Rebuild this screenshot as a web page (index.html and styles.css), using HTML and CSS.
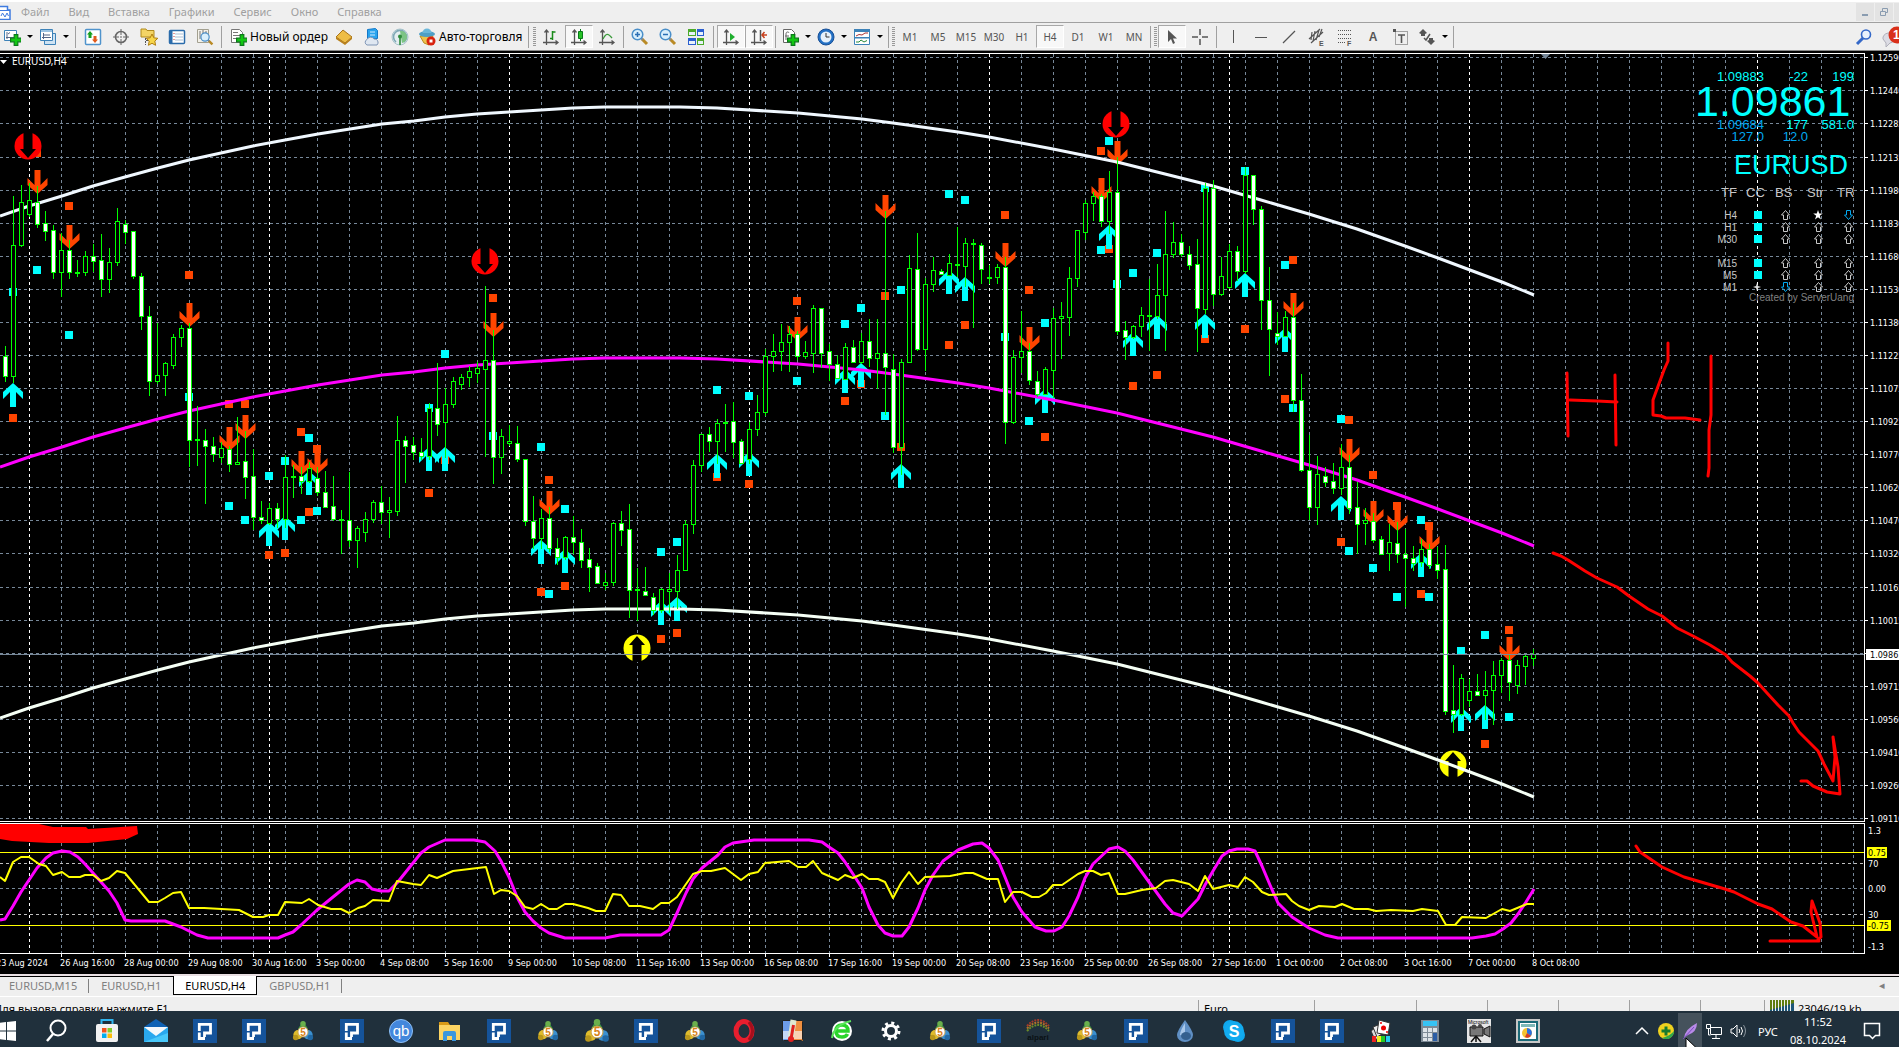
FILE: index.html
```html
<!DOCTYPE html>
<html lang="ru">
<head>
  <meta charset="UTF-8">
  <meta name="viewport" content="width=device-width, initial-scale=1">
  <title>EURUSD,H4</title>
  <link rel="stylesheet" href="styles.css">
</head>
<body>

<svg class="defs" aria-hidden="true">
  <symbol id="plus" viewBox="0 0 10 10"><path d="M3.5.5h3v3h3v3h-3v3h-3v-3h-3v-3h3z" fill="#12c812" stroke="#0a7a1a"/></symbol>
  <symbol id="pbank" viewBox="0 0 24 24"><path d="M0 0h24v24H0z" fill="#15539a"/><path d="M6.300 12V5.300H17.500V14H11.500V18M6.300 13.500V19.500H12" fill="none" stroke="#fff" stroke-width="2.800"/></symbol>
  <symbol id="mt5" viewBox="0 0 24 24">
    <path d="M12 1l5 8-2 6H9L7 9z" fill="#3f9a45"/><circle cx="12" cy="4" r="3" fill="#6ab04c"/>
    <circle cx="6.500" cy="16" r="5" fill="#e0bd2c"/><circle cx="4" cy="19" r="3" fill="#b9971c"/>
    <circle cx="17.500" cy="16" r="5" fill="#3b90d0"/><circle cx="20" cy="19" r="3" fill="#2168a4"/>
    <circle cx="12" cy="13" r="5.500" fill="#fff" stroke="#c9a04a"/><text x="12" y="17" class="five">5</text>
  </symbol>
  <symbol id="zoom" viewBox="0 0 18 18"><path d="M11 11l5 5" stroke="#b98a25" stroke-width="3"/><path d="M10 10l2 2" stroke="#888" stroke-width="2"/><circle cx="6.500" cy="6.500" r="5.300" fill="#d9effc" stroke="#4a8fc9" stroke-width="1.500"/></symbol>
  <symbol id="axes" viewBox="0 0 18 18"><path d="M4.500 2v15M1 14.500h15M2.500 4.500l2-2.500 2 2.500M13.500 12.500l2.500 2-2.500 2" fill="none" stroke="#555" stroke-width="1.300"/></symbol>
</svg>

<nav class="menu">
  <svg class="app" width="11" height="16" viewBox="0 0 11 16"><path d="M-4 2.500H7.500V6h2.500v9.500H-4z" fill="#fff" stroke="#3f7be0" stroke-width="1.500"/><path d="M-4 6.500H10M1 12l1.500-3L5 13l2-4 1.500 3" fill="none" stroke="#3f7be0"/></svg>
  <a href="#file">Файл</a>
  <a href="#view">Вид</a>
  <a href="#insert">Вставка</a>
  <a href="#charts">Графики</a>
  <a href="#service">Сервис</a>
  <a href="#window">Окно</a>
  <a href="#help">Справка</a>
  <div class="window-buttons">
    <button aria-label="Свернуть"><svg width="10" height="10"><path d="M2 8h6" stroke="#8a9cb0" stroke-width="2"/></svg></button>
    <button aria-label="Восстановить"><svg width="10" height="10"><path d="M3.500 4V1.500h5v4H6.500M1.500 4.500h5v4h-5z" fill="none" stroke="#8a9cb0"/></svg></button>
    <button aria-label="Закрыть"><svg width="10" height="10"><path d="M2 2l6 6M8 2L2 8" stroke="#8a9cb0"/></svg></button>
  </div>
</nav>

<div class="toolbar">
  <div class="split">
    <button aria-label="Новый график"><svg width="18" height="18"><path d="M1.500 2.500h12v10h-12z" fill="#fff" stroke="#3d82b8"/><path d="M4 4v7M3 9.500h8M5 6l2-1.500" stroke="#568" fill="none"/><use href="#plus" x="7" y="6" width="12" height="12"/></svg></button>
    <button class="drop" aria-label="Список графиков"></button>
  </div>
  <div class="split">
    <button aria-label="Профили"><svg width="18" height="18"><path d="M5.500 5.500h11v11h-11z" fill="#cfe3f3" stroke="#3d82b8"/><path d="M1.500 1.500h12v11h-12z" fill="#fff" stroke="#3d82b8"/><path d="M2 3h11" stroke="#9cc4e4" stroke-width="2"/><path d="M4.500 5v6M3 9.500h9M4 7h7" stroke="#568" fill="none"/></svg></button>
    <button class="drop" aria-label="Список профилей"></button>
  </div>
  <i class="sep wide"></i>
  <button aria-label="Обзор рынка"><svg width="18" height="18"><rect x="1.500" y="1.500" width="15" height="15" rx="1" fill="#fff" stroke="#4f93cc" stroke-width="1.500"/><path d="M6 3l3 3.500H7.500V10h-3V6.500H3z" fill="#16a020"/><path d="M11 15l3-3.500h-1.500V8h-3v3.500H8z" fill="#e05a1c"/></svg></button>
  <button aria-label="Окно данных"><svg width="18" height="18"><circle cx="9" cy="9" r="5.500" fill="none" stroke="#666" stroke-width="1.600"/><path d="M9 1v6M9 11v6M1 9h6M11 9h6M8 9h2" stroke="#666"/></svg></button>
  <button aria-label="Навигатор"><svg width="18" height="18"><path d="M1 3V1h5l1 1.500h7V9H1z" fill="#f3d465" stroke="#b08a1c"/><path d="M5.500 10v7M6 12.500h3" stroke="#555" stroke-dasharray="2 1"/><path d="M12 6l1.800 3.800 4 .500-3 2.800.800 4.200-3.600-2-3.600 2 .800-4.200-3-2.800 4-.500z" fill="#f7d64a" stroke="#b07e10"/></svg></button>
  <button aria-label="Терминал"><svg width="18" height="18"><rect x="1.500" y="2.500" width="15" height="13" rx="1" fill="#fff" stroke="#2b6cab" stroke-width="1.500"/><path d="M2 3h2.500v12H2z" fill="#2b6cab"/><path d="M7 6h8M7 9h8M7 12h8" stroke="#a9bfd4"/><path d="M5.500 5.500h1M5.500 8.500h1M5.500 11.500h1" stroke="#c33"/></svg></button>
  <button aria-label="Тестер стратегий"><svg width="18" height="18"><path d="M1.500 1.500h11v13h-11z" fill="#f4f2ea" stroke="#a3a090"/><path d="M4 3v8M7 2v9M10 3v6" stroke="#777"/><use href="#zoom" x="4" y="4" width="14" height="14"/></svg></button>
  <i class="sep"></i>
  <button class="labeled order"><svg width="18" height="18"><path d="M2.500 1.500h8l3 3v10h-11z" fill="#fff" stroke="#777"/><path d="M4 4.500h5M4 7.500h7M4 10.500h5" stroke="#777"/><use href="#plus" x="7" y="6" width="12" height="12"/></svg>Новый ордер</button>
  <button aria-label="MetaEditor"><svg width="18" height="18"><path d="M1 9l7-7 9 7-7 6z" fill="#eebd45" stroke="#a9741a"/><path d="M1 9v2l9 6 7-6V9l-7 6z" fill="#b9811c"/></svg></button>
  <button aria-label="Виртуальный хостинг"><svg width="18" height="18"><path d="M4.500 1.500l8-1 2 2v8h-10z" fill="#2aa4ee" stroke="#1478c8"/><path d="M7 4h5M7 7h5" stroke="#cfeaff"/><path d="M4 17a3 3 0 0 1 0-5.500 4 4 0 0 1 7-.500 3.500 3.500 0 0 1 3 6z" fill="#dfe7f1" stroke="#7f95b5"/></svg></button>
  <button aria-label="Сигналы"><svg width="18" height="18"><circle cx="9" cy="9" r="8" fill="#e4eef0" stroke="#a9c4cc"/><path d="M5 14a6.500 6.500 0 1 1 8 0" fill="none" stroke="#7fa8b5" stroke-width="1.600"/><path d="M9 3a6 6 0 0 1 2 12z" fill="#7cc485"/><circle cx="9" cy="8.500" r="2" fill="#2e8b3c"/><path d="M9 9v8" stroke="#2e8b3c" stroke-width="1.600"/></svg></button>
  <button class="labeled auto"><svg width="18" height="18"><path d="M2 8l4 7 5 2 4-9z" fill="#eec34c" stroke="#b98b1e"/><ellipse cx="9" cy="6" rx="8" ry="3" fill="#4f9fc6"/><path d="M4.500 5a4.500 4.500 0 0 1 9 0z" fill="#6bb7da"/><circle cx="13" cy="13" r="4.500" fill="#d8220f"/><path d="M11.500 11.500h3v3h-3z" fill="#fff"/></svg>Авто-торговля</button>
  <i class="sep wide"></i><i class="grip"></i>
  <button aria-label="Бары"><svg width="18" height="18"><use href="#axes" width="18" height="18"/><path d="M10.500 3v9M10.500 4h3M8 10.500h2.500" stroke="#1a8a1a" stroke-width="1.500"/></svg></button>
  <button class="on" aria-label="Свечи"><svg width="18" height="18"><use href="#axes" width="18" height="18"/><path d="M10.500 1v12" stroke="#0a7a1a"/><path d="M8.500 3.500h4v7h-4z" fill="#27c327" stroke="#0a7a1a"/></svg></button>
  <button aria-label="Линия"><svg width="18" height="18"><use href="#axes" width="18" height="18"/><path d="M5 11c3-6 5-6 9-1" fill="none" stroke="#3a9a3a" stroke-width="1.300"/></svg></button>
  <i class="sep"></i>
  <button aria-label="Увеличить"><svg width="18" height="18"><use href="#zoom" width="18" height="18"/><path d="M4 6.500h5M6.500 4v5" stroke="#2a6fb5" stroke-width="1.500"/></svg></button>
  <button aria-label="Уменьшить"><svg width="18" height="18"><use href="#zoom" width="18" height="18"/><path d="M4 6.500h5" stroke="#2a6fb5" stroke-width="1.500"/></svg></button>
  <button aria-label="Окна плиткой"><svg width="18" height="18"><path d="M1 1h8v7H1zM10 10h7v7h-7z" fill="#4caa2a"/><path d="M10 1h7v7h-7zM1 10h8v7H1z" fill="#2b5fd0"/><path d="M2 4h6v3H2zM11 4h5v3h-5zM2 13h6v3H2zM11 13h5v3h-5z" fill="#e8f2fa"/></svg></button>
  <i class="sep wide"></i>
  <button class="on" aria-label="Автопрокрутка"><svg width="18" height="18"><use href="#axes" width="18" height="18"/><path d="M8 5l5 4-5 4z" fill="#1fae2e"/></svg></button>
  <button class="on" aria-label="Сдвиг графика"><svg width="18" height="18"><use href="#axes" width="18" height="18"/><path d="M10.500 2v11" stroke="#555" stroke-width="1.500"/><path d="M17 7h-5M14.500 4L12 7l2.500 3" stroke="#c8401c" stroke-width="1.500" fill="none"/></svg></button>
  <i class="sep"></i>
  <div class="split">
    <button aria-label="Индикаторы"><svg width="18" height="18"><path d="M2.500 1.500h8l3 3v10h-11z" fill="#fff" stroke="#666"/><path d="M5 12V6c0-3 3-2 3-1M4 8h4" stroke="#666" fill="none"/><use href="#plus" x="6" y="6" width="12" height="12"/></svg></button>
    <button class="drop" aria-label="Список индикаторов"></button>
  </div>
  <div class="split">
    <button aria-label="Периоды"><svg width="18" height="18"><circle cx="9" cy="9" r="8" fill="#2370c4" stroke="#174f96"/><circle cx="9" cy="9" r="5.500" fill="#e6f1fb"/><path d="M9 5v4h3.500" stroke="#333" fill="none"/></svg></button>
    <button class="drop" aria-label="Список периодов"></button>
  </div>
  <div class="split">
    <button aria-label="Шаблоны"><svg width="18" height="18"><path d="M1.500 1.500h15v15h-15z" fill="#fff" stroke="#3d82b8"/><path d="M1 1h16v3H1zM1 9h16v1.500H1z" fill="#3d82b8"/><path d="M3 8l3-1.500 3 .500 3-2h3" stroke="#a33" fill="none"/><path d="M3 14h3l2-2 3 2 3-1.500" stroke="#2a8a3a" fill="none"/></svg></button>
    <button class="drop" aria-label="Список шаблонов"></button>
  </div>
  <i class="sep"></i><i class="grip"></i>
  <button>M1</button>
  <button>M5</button>
  <button>M15</button>
  <button>M30</button>
  <button>H1</button>
  <button class="on">H4</button>
  <button>D1</button>
  <button>W1</button>
  <button>MN</button>
  <i class="sep"></i><i class="grip"></i>
  <button class="on" aria-label="Курсор"><svg width="18" height="18"><path d="M5 2v12l3-3 2 5 2-1-2-4.500h4z" fill="#555"/></svg></button>
  <button aria-label="Перекрестие"><svg width="18" height="18"><path d="M9 1v6M9 11v6M1 9h6M11 9h6" stroke="#555" stroke-width="1.500"/></svg></button>
  <i class="sep"></i>
  <button aria-label="Вертикальная линия"><svg width="18" height="18"><path d="M9.500 2v13" stroke="#555"/></svg></button>
  <button aria-label="Горизонтальная линия"><svg width="18" height="18"><path d="M3 9.500h12" stroke="#555"/></svg></button>
  <button aria-label="Трендовая линия"><svg width="18" height="18"><path d="M3 15L15 3" stroke="#555" stroke-width="1.200"/></svg></button>
  <button aria-label="Канал"><svg width="18" height="18"><path d="M1 11L12 1M3 15L15 4M4 4l-1 8M7 3L5 13M11 2L8 12M14 1l-3 8" stroke="#555" stroke-width="1.200"/><text x="11" y="18" class="tiny">E</text></svg></button>
  <button aria-label="Фибоначчи"><svg width="18" height="18"><path d="M2 2.500h13M2 6.500h13M2 10.500h13M2 14.500h8" stroke="#555" stroke-dasharray="1 1"/><text x="11" y="18" class="tiny">F</text></svg></button>
  <button class="letter" aria-label="Текст">A</button>
  <button aria-label="Метка"><svg width="18" height="18"><path d="M3.500 3.500h12v13h-12z" fill="none" stroke="#555" stroke-dasharray="1 1"/><path d="M1 1h3v3H1z" fill="#555"/><path d="M6 7h7M9.500 7v8" stroke="#555" stroke-width="1.600"/></svg></button>
  <div class="split">
    <button aria-label="Стрелки"><svg width="18" height="18"><path d="M5 1l4 4-2 1v2H3V6L1 5zM13 17l-4-4 2-1v-2h4v2l2 1z" fill="#555"/><path d="M6 10l2 2 4-6" stroke="#555" fill="none" stroke-width="1.500"/></svg></button>
    <button class="drop" aria-label="Список стрелок"></button>
  </div>
  <i class="sep"></i>
  <div class="toolbar-right">
    <button aria-label="Поиск"><svg width="18" height="18"><path d="M2 16l6-6" stroke="#3468c8" stroke-width="3"/><circle cx="11" cy="6.500" r="4.500" fill="#e8f1fc" stroke="#3468c8" stroke-width="1.600"/></svg></button>
    <button aria-label="Сообщения"><svg width="24" height="24"><path d="M3 14a6 5 0 1 1 7 4l-4 4v-4z" fill="#dcdce4" stroke="#b0b0ba"/><circle cx="17" cy="10" r="8.500" fill="#d9301a"/><text x="13" y="14" class="badge">1</text></svg></button>
  </div>
</div>

<svg class="chart" id="chart" viewBox="0 51 1899 923" role="img" aria-label="EURUSD,H4"></svg>

<nav class="tabs">
  <a href="#m15">EURUSD,M15</a>
  <a href="#h1">EURUSD,H1</a>
  <a href="#h4" class="active">EURUSD,H4</a>
  <a href="#gbp">GBPUSD,H1</a>
  <span class="scroll">◂</span>
</nav>

<div class="status">
  <span class="hint">Для вызова справки нажмите F1</span>
  <span class="w116">Euro</span>
  <span class="w102"></span>
  <span class="w71"></span>
  <span class="w71"></span>
  <span class="w71"></span>
  <span class="w71"></span>
  <span class="w64"></span>
  <span class="traffic"><svg width="24" height="14"><path d="M0 0h24v10H0z" fill="#5f7d10"/><path d="M0 14v-4L24 3v11z" fill="#1d5578"/><path d="M2.500 0v14M5.500 0v14M8.500 0v14M11.500 0v14M14.500 0v14M17.500 0v14M20.500 0v14" stroke="#efefef"/></svg>23046/19 kb</span>
</div>

<footer class="taskbar">
  <div class="apps">
    <button aria-label="Пуск"><svg width="24" height="24"><path d="M2 4l7-1v8.500H2zM10 3l9-1v9.500h-9zM2 12.500h7V21l-7-1zM10 12.500h9V22l-9-1z" fill="#fff"/></svg></button>
    <button aria-label="Поиск"><svg width="24" height="24"><circle cx="12" cy="9" r="7.500" fill="none" stroke="#fff" stroke-width="2"/><path d="M7 15l-6 7" stroke="#fff" stroke-width="2.500"/></svg></button>
    <button aria-label="Store"><svg width="24" height="24"><path d="M6.500 6V1h11v5" fill="none" stroke="#31b5ee" stroke-width="2"/><rect x="1" y="5" width="22" height="18" rx="2" fill="#f2f2f2"/><path d="M7 9h4.500v4.500H7z" fill="#f1511b"/><path d="M12.500 9H17v4.500h-4.500z" fill="#80cc28"/><path d="M7 14.500h4.500V19H7z" fill="#00adef"/><path d="M12.500 14.500H17V19h-4.500z" fill="#fbbc09"/></svg></button>
    <button aria-label="Почта"><svg width="24" height="24"><path d="M0 8l12-8 12 8z" fill="#0f62b5"/><path d="M0 8h24v15H0z" fill="#2aa8ee"/><path d="M0 8h24l-12 9z" fill="#f5f8fb"/><path d="M0 23l24-9v9z" fill="#48c8fa"/></svg></button>
    <button aria-label="Банк"><svg width="24" height="24"><use href="#pbank"/></svg></button>
    <button aria-label="Банк"><svg width="24" height="24"><use href="#pbank"/></svg></button>
    <button aria-label="MetaTrader"><svg width="22" height="22"><use href="#mt5"/></svg></button>
    <button aria-label="Банк"><svg width="24" height="24"><use href="#pbank"/></svg></button>
    <button aria-label="qBittorrent"><svg width="24" height="24"><circle cx="12" cy="12" r="11.500" fill="#4387dc" stroke="#8fc0f5"/><text x="12" y="17" class="qb">qb</text></svg></button>
    <button aria-label="Проводник"><svg width="24" height="24"><path d="M1 3h9l2 3H1z" fill="#d99a16"/><path d="M1 6h21v15H1z" fill="#fcd462"/><path d="M5 22v-8q0-2 2-2h9q2 0 2 2v8h-4v-5H9v5z" fill="#3b97dd"/></svg></button>
    <button aria-label="Банк"><svg width="24" height="24"><use href="#pbank"/></svg></button>
    <button aria-label="MetaTrader"><svg width="22" height="22"><use href="#mt5"/></svg></button>
    <button aria-label="MetaTrader"><svg width="26" height="26"><use href="#mt5"/></svg></button>
    <button aria-label="Банк"><svg width="24" height="24"><use href="#pbank"/></svg></button>
    <button aria-label="MetaTrader"><svg width="22" height="22"><use href="#mt5"/></svg></button>
    <button aria-label="Opera"><svg width="24" height="24"><ellipse cx="12" cy="12" rx="8" ry="9.500" fill="none" stroke="#e81e2e" stroke-width="5"/><path d="M17 3q7 9 0 18" fill="none" stroke="#a50f1c" stroke-width="3"/></svg></button>
    <button aria-label="Термометр"><svg width="24" height="24"><path d="M2 2h10v20H2z" fill="#6d9ce8"/><path d="M12 2h10v20H12z" fill="#f09040"/><path d="M2 12h20v8H2z" fill="#fff" opacity=".6"/><rect x="1.500" y="1.500" width="20" height="20" rx="1" fill="none" stroke="#222"/><path d="M12.500 1L10 18" stroke="#dfe8d0" stroke-width="6"/><path d="M12.500 6L10 20" stroke="#e02020" stroke-width="3"/><circle cx="10" cy="20" r="3" fill="#e02020"/></svg></button>
    <button aria-label="Браузер"><svg width="24" height="24"><circle cx="12" cy="12" r="10" fill="#fff"/><path d="M6 12h12q0-6-6-6t-6 6q0 6 6 6 4 0 5.500-3" fill="none" stroke="#2bd52b" stroke-width="3.500"/><path d="M2 19Q4 6 21 2" fill="none" stroke="#5be65b" stroke-width="2"/></svg></button>
    <button aria-label="Параметры"><svg width="24" height="24"><circle cx="12" cy="12" r="5.500" fill="none" stroke="#fff" stroke-width="3"/><circle cx="12" cy="12" r="8" fill="none" stroke="#fff" stroke-width="3" stroke-dasharray="3 3.280"/></svg></button>
    <button aria-label="MetaTrader"><svg width="22" height="22"><use href="#mt5"/></svg></button>
    <button aria-label="Банк"><svg width="24" height="24"><use href="#pbank"/></svg></button>
    <button aria-label="Alpari"><svg width="24" height="24"><g fill="none" stroke-width="2" stroke-dasharray="2 1"><path d="M1 7q11-12 22 0" stroke="#a33a2a"/><path d="M1 9.500q11-12 22 0" stroke="#b0702a"/><path d="M1 12q11-12 22 0" stroke="#6a8a2a"/></g><text x="12" y="21" class="alpari">alpari</text></svg></button>
    <button aria-label="MetaTrader"><svg width="22" height="22"><use href="#mt5"/></svg></button>
    <button aria-label="Банк"><svg width="24" height="24"><use href="#pbank"/></svg></button>
    <button aria-label="Капля"><svg width="24" height="24"><path d="M12 1q8 11 8 15a8 7 0 0 1-16 0q0-4 8-15z" fill="#5f8fc4"/><path d="M12 4q-5 8-5 12l5 1z" fill="#a9c8ea"/><ellipse cx="13" cy="17" rx="5" ry="4" fill="#34608f"/></svg></button>
    <button aria-label="Skype"><svg width="24" height="24"><circle cx="8" cy="8" r="7" fill="#0fa8ee"/><circle cx="16" cy="16" r="7" fill="#0fa8ee"/><circle cx="12" cy="12" r="10" fill="#12abf0"/><text x="12" y="18" class="skype">S</text></svg></button>
    <button aria-label="Банк"><svg width="24" height="24"><use href="#pbank"/></svg></button>
    <button aria-label="Банк"><svg width="24" height="24"><use href="#pbank"/></svg></button>
    <button aria-label="Карты"><svg width="24" height="24"><path d="M2 12l4-3 5 9-5 3z" fill="#ddd" stroke="#333"/><path d="M4 8l5-2 4 9-5 3z" fill="#eee" stroke="#333"/><path d="M10 1l11 3-2 12-11-2z" fill="#fff" stroke="#333"/><circle cx="14.500" cy="9" r="2.500" fill="#e00"/><circle cx="12" cy="4" r="1" fill="#e00"/><circle cx="18" cy="13" r="1" fill="#e00"/><path d="M3 17h4v6H3z" fill="#e22"/><path d="M8 17h4v6H8z" fill="#ee2"/><path d="M12 17h4v6h-4z" fill="#2c2"/><path d="M17 17h4v6h-4z" fill="#2ce"/></svg></button>
    <button aria-label="Калькулятор"><svg width="24" height="24"><path d="M3 1h18v22H3z" fill="#7d8a96"/><path d="M5 2h14v5H5z" fill="#36c3f5"/><path d="M5 9h4v4H5zM10 9h4v4h-4zM5 14h4v4H5zM10 14h4v4h-4zM5 19h4v3H5zM10 19h4v3h-4zM15 9h4v4h-4z" fill="#dde3e8"/><path d="M15 14h4v8h-4z" fill="#2b5da5"/></svg></button>
    <button aria-label="Камера"><svg width="24" height="24"><path d="M0 0h24v24H0z" fill="#e6e6e6"/><text x="1" y="5" class="ms">Microsoft</text><path d="M3 8h13v9H3zM17 10l6-3v11l-6-3z" fill="#777" stroke="#111"/><circle cx="7" cy="8" r="2.500" fill="#444"/><circle cx="13" cy="7" r="2" fill="#444"/><path d="M9 17l-5 6M9 17l5 6M9 17v6" stroke="#111" stroke-width="1.500"/></svg></button>
    <button aria-label="Диаграмма"><svg width="24" height="24"><path d="M0 0h24v24H0z" fill="#c7c7c7"/><path d="M3 3h18v18H3z" fill="#fff" stroke="#1b6a78" stroke-width="2"/><path d="M5 5h14v3H5z" fill="#7fb8b8"/><circle cx="11" cy="14" r="5" fill="#f2c230"/><path d="M11 14V9a5 5 0 0 1 4 8z" fill="#2b6fe0"/><path d="M11 14l4 3a5 5 0 0 1-6 1z" fill="#d23a2a"/></svg></button>
  </div>
  <div class="tray">
    <button aria-label="Скрытые значки"><svg width="16" height="16"><path d="M2 11l6-6 6 6" fill="none" stroke="#fff" stroke-width="1.500"/></svg></button>
    <button aria-label="Антивирус"><svg width="16" height="16"><circle cx="8" cy="8" r="8" fill="#f0d21e"/><path d="M4 15a8 8 0 0 0 12-7q-4 5-12 7z" fill="#2fa84a"/><path d="M8 3.500v9M3.500 8h9" stroke="#177a2e" stroke-width="3"/></svg></button>
    <button class="hot" aria-label="Перо"><svg width="18" height="18"><path d="M3 16Q4 7 16 1q0 9-9 12z" fill="#b98ae8"/><path d="M2 17L13 5" stroke="#7a4cc0"/></svg></button>
    <button aria-label="Сеть"><svg width="16" height="16"><path d="M4.500 4.500h11v7h-11zM10 12v3M6 15.500h8" fill="none" stroke="#fff"/><path d="M.5 1.500h4v4h-4zM2.500 6v6h2" fill="#20303c" stroke="#fff"/></svg></button>
    <button aria-label="Громкость"><svg width="16" height="16"><path d="M1 6h2l4-4v12l-4-4H1zM9 6q1.500 2 0 4M11 4q3 4 0 8" fill="none" stroke="#fff"/><path d="M13.500 2q4 6 0 12" fill="none" stroke="#8a949c"/></svg></button>
    <span class="lang">РУС</span>
    <time class="clock">11:52<br>08.10.2024</time>
    <button class="note" aria-label="Уведомления"><svg width="18" height="18"><path d="M1.500 1.500h15v12h-4l-3 3-3-3h-5z" fill="none" stroke="#fff" stroke-width="1.500"/></svg></button>
    <svg class="pointer" width="12" height="18" viewBox="0 0 12 18"><path d="M1 1v15l4-3.500 2.500 5 2.500-1-2-5h4z" fill="#fff" stroke="#000"/></svg>
  </div>
</footer>

<script src="chart.js"></script>
</body>
</html>
```
FILE: styles.css
```css
* {
  box-sizing: border-box;
}
body {
  margin: 0;
  background: #efefef;
  color: #000;
  font-family: "Noto Sans", "Open Sans", sans-serif;
  font-size: 11px;
  overflow: hidden;
}
button {
  border: 0;
  padding: 0;
  background: none;
  font: inherit;
  color: inherit;
  display: flex;
  align-items: center;
  justify-content: center;
}
a {
  color: inherit;
  text-decoration: none;
}
svg {
  display: block;
  flex: none;
}
.defs {
  position: absolute;
  width: 0;
  height: 0;
}

/* menu */
.menu {
  display: flex;
  align-items: center;
  gap: 1px;
  height: 23px;
  border-top: 2px solid #fff;
  border-bottom: 1px solid #a0a0a0;
  color: #a0a0a0;
  overflow: hidden;
}
.menu a {
  padding: 0 9px;
  line-height: 20px;
}
.window-buttons {
  display: flex;
  gap: 1px;
  margin-left: auto;
  margin-right: -13px;
}
.window-buttons button {
  width: 18px;
  height: 18px;
  background: #e3e3e3;
}

/* toolbar */
.toolbar {
  display: flex;
  align-items: center;
  height: 28px;
  border-bottom: 1px solid #8a8a8a;
  overflow: hidden;
  color: #555;
  font-size: 10px;
}
.toolbar button {
  width: 28px;
  height: 23px;
  flex: none;
}
.toolbar .on {
  background: #f8f8f8;
  border: 1px solid #a8a8a8;
  border-right-color: #fff;
  border-bottom-color: #fff;
}
.toolbar .labeled {
  gap: 3px;
  justify-content: flex-start;
  color: #000;
  font-size: 12px;
  white-space: nowrap;
}
.toolbar .order {
  width: 106px;
  padding-left: 5px;
}
.toolbar .auto {
  width: 111px;
  padding-left: 4px;
}
.toolbar .letter {
  font: bold 12px "Liberation Sans", sans-serif;
}
.split {
  display: flex;
  flex: none;
  width: 36px;
}
.toolbar .split button {
  width: 24px;
}
.toolbar .split .drop {
  width: 12px;
}
.drop::before {
  content: "";
  border: 3px solid transparent;
  border-top-color: #000;
  border-bottom: 0;
}
.sep {
  flex: none;
  width: 1px;
  height: 22px;
  margin: 0 2px;
  background: #a0a0a0;
}
.sep.wide {
  margin: 0 3px;
}
.grip {
  flex: none;
  width: 3px;
  height: 20px;
  margin: 0 1px;
  background: repeating-linear-gradient(#999 0 1px, #efefef 1px 2px);
}
.toolbar-right {
  display: flex;
  margin-left: auto;
  margin-right: -7px;
}
.tiny {
  font: bold 7px "Liberation Sans", sans-serif;
  fill: #555;
}
.badge {
  font: bold 12px "Liberation Sans", sans-serif;
  fill: #fff;
}

/* chart */
.chart {
  width: 100%;
  height: auto;
  background: #000;
  font-family: "Liberation Sans", sans-serif;
}
.crisp {
  shape-rendering: crispEdges;
}
.axis {
  font-family: "DejaVu Sans Condensed", "Noto Sans", sans-serif;
  font-size: 9px;
  fill: #fff;
}
.title {
  font-family: "Noto Sans", sans-serif;
  font-size: 10px;
  fill: #fff;
}
.dark {
  fill: #000;
}
.quote {
  font-size: 13px;
  text-anchor: end;
}
.big {
  font-size: 43px;
}
.symbol {
  font-size: 27px;
}
.head {
  font-size: 13px;
  fill: #c8c8c8;
}
.tf {
  font-size: 10px;
  fill: #c8c8c8;
  text-anchor: end;
}
.author {
  font-size: 10px;
  fill: #808080;
  text-anchor: end;
}
.cyan {
  fill: #0ff;
}
.blue {
  fill: #00a8f0;
}
.ink {
  fill: none;
  stroke: #f00;
  stroke-width: 3px;
  stroke-linejoin: round;
  stroke-linecap: round;
}

/* chart tabs */
.tabs {
  display: flex;
  height: 23px;
  border-top: 2px solid #e8dfe2;
  border-bottom: 1px solid #fff;
  box-shadow: inset 0 1px 0 #000;
  color: #808080;
}
.tabs a {
  padding: 0 12px;
  line-height: 19px;
  white-space: nowrap;
  background: linear-gradient(#808080, #808080) right center / 1px 14px no-repeat;
}
.tabs a:first-child {
  padding-left: 9px;
}
.tabs a:nth-child(2) {
  background: none;
}
.tabs .active {
  height: 19px;
  background: #fff;
  border: 1px solid #000;
  border-top: 0;
  padding: 0 11px;
  color: #000;
}
.scroll {
  margin-left: auto;
  padding-right: 14px;
  line-height: 18px;
}

/* status bar */
.status {
  display: flex;
  height: 14px;
  overflow: hidden;
  white-space: nowrap;
}
.status span {
  border-left: 1px solid #a0a0a0;
  padding-left: 5px;
  height: 14px;
  margin-top: 3px;
  line-height: 18px;
}
.status .hint {
  flex: 1;
  border: 0;
  padding: 0;
  margin-left: -6px;
}
.w116 {
  width: 116px;
}
.w102 {
  width: 102px;
}
.w71 {
  width: 71px;
}
.w64 {
  width: 64px;
}
.traffic {
  display: flex;
  gap: 4px;
  width: 135px;
}

/* taskbar */
.taskbar {
  display: flex;
  justify-content: space-between;
  height: 36px;
  padding-top: 2px;
  background: #20303c;
  color: #fff;
  overflow: hidden;
}
.apps {
  display: flex;
  margin-left: -16px;
}
.apps button {
  width: 49px;
  height: 36px;
}
.tray {
  display: flex;
  align-items: center;
  height: 36px;
  padding-right: 5px;
  position: relative;
}
.tray button {
  width: 24px;
  height: 36px;
}
.tray .hot {
  background: #45525c;
}
.tray .note {
  width: 44px;
}
.lang {
  width: 36px;
  text-align: center;
}
.clock {
  width: 64px;
  text-align: center;
  line-height: 18px;
}
.pointer {
  position: absolute;
  left: 55px;
  top: 24px;
}
.five {
  font: bold 11px "Liberation Sans", sans-serif;
  text-anchor: middle;
  fill: #d98216;
}
.qb {
  font: 15px "Liberation Sans", sans-serif;
  text-anchor: middle;
  fill: #fff;
}
.alpari {
  font: bold 8px "Liberation Sans", sans-serif;
  text-anchor: middle;
  fill: #0a1015;
}
.skype {
  font: bold 16px "Liberation Sans", sans-serif;
  text-anchor: middle;
  fill: #fff;
}
.ms {
  font: 5px "Liberation Sans", sans-serif;
}
```
FILE: chart.js
```js
const NS = 'http://www.w3.org/2000/svg';
const chart = document.getElementById('chart');

function add(tag, attrs, text) {
  const el = document.createElementNS(NS, tag);
  for (const key in attrs) el.setAttribute(key, attrs[key]);
  if (text !== undefined) el.textContent = text;
  chart.appendChild(el);
  return el;
}

function path(d, stroke, width, dash) {
  return add('path', { d, stroke, 'stroke-width': width || 1, fill: 'none', 'stroke-dasharray': dash || 'none', class: 'crisp' });
}

const RIGHT = 1864;
const SLATE = '#778899';

// grid
const prices = ['1.12590', '1.12440', '1.12285', '1.12135', '1.11980', '1.11830', '1.11680', '1.11530',
  '1.11380', '1.11225', '1.11075', '1.10925', '1.10770', '1.10620', '1.10470', '1.10320',
  '1.10165', '1.10015', '1.09860', '1.09715', '1.09560', '1.09410', '1.09260', '1.09110'];
const rowY = prices.map((p, i) => 57 + 33 * i + (i > 2 ? 1 : 0) + (i > 15 ? 1 : 0));
const weeks = [29, 269, 509, 749, 989, 1229, 1469, 1757];

rowY.forEach(y => path(`M0 ${y}.5H${RIGHT}`, SLATE, 1, '3 3'));
for (let x = 29; x < RIGHT; x += 32) {
  if (!weeks.includes(x)) path(`M${x}.5 54V821M${x}.5 825V953`, SLATE, 1, '3 3');
}
weeks.forEach(x => path(`M${x}.5 54V821M${x}.5 825V953`, '#fff', 1, '3 3'));

// signals
const buyDots = [[13,292],[37,270],[69,335],[189,397],[229,506],[245,520],[269,476],[285,461],[309,438],
  [301,520],[317,511],[429,408],[445,354],[493,436],[541,447],[565,509],[549,594],[661,552],[677,542],
  [717,390],[749,396],[797,381],[845,324],[861,308],[885,416],[901,290],[949,194],[965,200],[1005,337],
  [1045,323],[1029,421],[1101,250],[1109,141],[1117,284],[1133,273],[1157,253],[1205,188],[1245,171],
  [1285,265],[1293,408],[1341,419],[1349,551],[1373,568],[1397,597],[1421,520],[1429,597],[1461,651],
  [1485,635],[1509,717]];
const sellDots = [[37,153],[69,206],[189,275],[13,418],[229,404],[245,404],[301,432],[317,449],[309,512],
  [269,555],[285,553],[429,493],[445,460],[493,298],[549,480],[541,592],[565,586],[661,639],[677,633],
  [717,477],[749,484],[797,301],[845,401],[861,384],[885,296],[901,447],[949,345],[965,325],[1005,215],
  [1029,290],[1045,437],[1101,151],[1109,249],[1133,386],[1157,375],[1205,339],[1245,329],[1285,399],
  [1293,260],[1341,542],[1349,420],[1373,475],[1397,506],[1421,594],[1429,526],[1485,744],[1509,630]];
const sellArrows = [[37,194],[69,249],[189,327],[229,451],[245,439],[301,475],[317,474],[493,337],[549,515],
  [797,341],[885,219],[1005,267],[1029,351],[1101,202],[1117,165],[1293,317],[1349,463],[1373,525],
  [1397,531],[1429,552],[1509,661]];
const buyArrows = [[13,383],[269,522],[285,516],[309,471],[429,447],[445,447],[541,540],[565,549],[661,601],
  [677,597],[717,454],[749,452],[845,369],[861,363],[901,464],[949,270],[965,277],[1045,389],[1109,225],
  [1133,332],[1157,315],[1205,314],[1245,273],[1285,328],[1341,496],[1421,553],[1461,707],[1485,705]];

buyDots.forEach(([x, y]) => add('rect', { x: x - 4, y: y - 4, width: 8, height: 8, fill: '#0ff' }));
sellDots.forEach(([x, y]) => add('rect', { x: x - 4, y: y - 4, width: 8, height: 8, fill: '#ff4500' }));

// f = 1 points up, f = -1 points down, tip at x,y
function arrow(x, y, f, fill) {
  const pts = [[0, 0], [10, 9], [10, 16], [3, 9], [3, 24], [-3, 24], [-3, 9], [-10, 16], [-10, 9]];
  add('polygon', { points: pts.map(p => `${x + p[0]},${y + f * p[1]}`).join(' '), fill });
}
sellArrows.forEach(([x, y]) => arrow(x + 0.5, y, -1, '#ff4500'));
buyArrows.forEach(([x, y]) => arrow(x, y, 1, '#0ff'));

function reversal(x, y, f, fill) {
  add('circle', { cx: x, cy: y, r: 13.5, fill });
  const pts = [[-4.5, -14], [4.5, -14], [4.5, 3], [8, 3], [0, 12], [-8, 3], [-4.5, 3]];
  add('polygon', { points: pts.map(p => `${x + p[0]},${y + f * p[1]}`).join(' '), fill: '#000' });
}
reversal(28, 146, 1, '#f00');
reversal(485, 261, 1, '#f00');
reversal(1116, 124, 1, '#f00');
reversal(637, 648, -1, '#ff0');
reversal(1453, 764, -1, '#ff0');

// envelope, one curve drawn with three shifts
const envelope = [[0,216],[29,206],[62,196],[93,186],[125,177],[158,168],[189,160],[221,153],[253,146],[285,140],
  [318,134],[350,129],[382,124],[414,121],[445,117],[477,114],[509,112],[541,110],[573,108],[605,107],[640,107],
  [680,107],[717,108],[766,111],[798,113],[830,116],[862,119],[893,123],[958,132],[989,137],[1053,149],[1117,162],
  [1165,174],[1213,186],[1261,200],[1309,214],[1357,229],[1405,246],[1438,258],[1470,270],[1502,282],[1534,295]];
function line(points, dy, stroke, width) {
  add('polyline', { points: points.map(p => `${p[0]},${p[1] + dy}`).join(' '), fill: 'none', stroke, 'stroke-width': width, 'stroke-linejoin': 'round' });
}
line(envelope, 0, '#f0f8ff', 3);
line(envelope, 251, '#f0f', 3);
line(envelope, 502, '#f5fff5', 3);

// candles: high, body top, body bottom, low, 1 = up
const candles = [[346,356,376,382,0],[196,245,376,383,1],[185,202,245,247,1],[183,200,214,217,1],[186,202,224,228,0],
  [211,223,231,241,0],[225,230,272,279,0],[233,250,272,297,1],[240,250,272,279,0],[260,272,273,277,1],
  [251,256,272,276,1],[244,256,261,272,0],[234,260,279,297,0],[248,262,279,293,1],[208,221,262,266,1],
  [220,224,232,244,0],[231,231,276,279,0],[273,276,316,330,0],[306,316,381,396,0],[323,375,381,384,1],
  [362,363,375,396,1],[334,337,365,369,1],[325,328,337,347,1],[323,328,440,467,0],[406,439,440,466,1],
  [429,440,446,504,0],[437,446,454,462,0],[442,448,457,463,1],[446,449,464,472,0],[417,462,464,465,1],
  [431,461,477,499,0],[449,476,517,530,0],[501,517,520,524,0],[503,508,523,525,1],[503,508,519,528,0],
  [455,477,519,528,1],[465,476,477,498,1],[467,476,481,494,0],[462,468,481,483,1],[467,478,492,496,0],
  [471,492,507,508,0],[476,506,519,521,0],[510,519,520,554,0],[472,520,540,547,0],[526,528,540,568,1],
  [512,519,532,542,1],[500,502,519,523,1],[486,502,512,524,0],[497,510,512,538,1],[416,440,511,516,1],
  [436,440,446,483,0],[437,445,452,460,0],[438,452,456,460,0],[403,408,456,460,1],[363,408,424,436,0],
  [388,404,422,458,1],[377,381,404,408,1],[374,377,384,390,1],[366,371,377,387,1],[362,368,373,383,1],
  [286,360,369,457,1],[330,360,457,484,0],[429,436,457,474,1],[425,441,443,446,1],[426,443,459,462,0],
  [459,459,521,526,0],[496,521,538,549,0],[509,518,538,549,1],[507,518,548,552,0],[538,548,557,565,0],
  [536,537,557,560,1],[516,537,542,554,0],[529,542,560,568,0],[548,559,567,592,0],[563,566,583,584,0],
  [573,582,585,590,1],[522,523,582,586,1],[511,523,530,546,0],[504,529,590,618,0],[568,589,590,621,1],
  [567,591,595,595,0],[593,597,610,615,0],[588,589,610,613,1],[573,589,591,613,1],[555,570,591,609,1],
  [520,524,570,571,1],[460,465,524,534,1],[434,434,465,472,1],[427,434,441,452,0],[419,423,441,464,1],
  [404,422,423,452,1],[402,421,442,458,0],[439,441,463,464,0],[422,429,459,464,1],[395,412,429,436,1],
  [349,356,412,416,1],[334,351,356,372,1],[324,342,351,371,1],[326,334,342,372,1],[331,334,356,360,0],
  [341,352,356,359,1],[305,308,353,373,1],[308,308,353,368,0],[344,351,364,381,0],[355,364,378,379,0],
  [343,347,379,379,1],[340,347,362,363,0],[333,341,362,364,1],[319,341,358,367,0],[319,353,358,389,1],
  [211,353,367,415,0],[354,369,447,453,0],[359,362,447,475,1],[255,268,362,363,1],[233,269,349,351,0],
  [278,284,349,371,1],[257,270,284,292,1],[269,271,274,275,0],[254,263,275,276,1],[227,264,265,277,1],
  [238,243,266,287,1],[239,243,244,328,1],[243,245,269,284,0],[265,277,278,284,1],[264,267,277,284,1],
  [257,267,422,444,0],[350,357,422,424,1],[311,351,357,373,1],[343,351,380,385,0],[371,381,394,397,0],
  [367,369,394,395,1],[308,318,370,398,1],[302,316,318,359,1],[267,278,317,336,1],[230,230,278,287,1],
  [200,203,232,240,1],[192,196,203,221,1],[194,196,221,227,0],[171,192,221,234,1],[157,192,331,335,0],
  [321,330,337,360,0],[325,326,337,339,1],[307,315,326,337,1],[279,315,316,351,1],[264,295,316,319,1],
  [211,254,295,351,1],[222,242,254,258,1],[234,242,254,257,0],[246,254,265,270,0],[239,264,308,352,0],
  [183,188,309,314,1],[180,188,294,306,0],[257,276,294,296,1],[244,251,287,289,1],[246,251,271,281,0],
  [167,175,271,274,1],[175,175,209,225,0],[206,209,300,330,0],[267,300,329,376,0],[312,333,336,345,0],
  [311,317,336,337,1],[303,317,400,412,0],[374,400,470,472,0],[435,470,507,520,0],[456,474,507,525,1],
  [467,476,482,487,0],[463,481,488,494,0],[444,467,488,495,1],[455,467,508,514,0],[482,507,524,554,0],
  [508,520,523,545,1],[513,521,540,543,0],[536,539,554,555,0],[524,542,553,571,1],[522,543,554,563,0],
  [529,554,558,607,0],[546,558,563,571,0],[539,549,562,567,1],[544,549,565,569,0],[547,564,570,579,0],
  [545,569,711,715,0],[665,710,714,733,0],[674,678,714,716,1],[679,691,700,707,1],[674,691,695,696,0],
  [671,690,695,720,1],[661,675,690,725,1],[658,660,675,693,1],[654,660,682,701,0],[660,665,685,694,1],
  [654,656,666,685,1],[649,654,658,666,1]];
candles.forEach(([high, top, bottom, low, up], i) => {
  const x = 5 + 8 * i;
  path(`M${x}.5 ${high}V${low}`, '#0f0');
  add('rect', { x: x - 1.5, y: top + 0.5, width: 4, height: bottom - top, fill: up ? '#000' : '#fff', stroke: '#0f0', class: 'crisp' });
});

// last price
path(`M0 654.5H${RIGHT}`, SLATE);

// oscillator window
path(`M0 888.5H${RIGHT}`, SLATE, 1, '3 3');
path(`M0 863.5H${RIGHT}M0 914.5H${RIGHT}`, '#c0c0c0', 1, '3 3');
path(`M0 852.5H${RIGHT}M0 925.5H${RIGHT}`, '#ff0');

const trend = [[0,920],[5,919],[13,906],[21,892],[29,880],[37,868],[46,858],[53,853],[62,851],[70,852],[78,857],
  [85,864],[93,873],[101,882],[109,891],[117,903],[125,920],[131,921],[165,921],[173,924],[181,927],[189,931],
  [197,935],[208,938],[278,938],[285,935],[293,932],[301,925],[317,910],[333,897],[349,884],[357,880],[365,882],
  [372,889],[381,891],[389,891],[397,883],[413,863],[421,853],[429,847],[445,840],[474,840],[485,842],[495,851],
  [501,861],[509,877],[517,897],[525,912],[533,921],[541,928],[549,933],[565,938],[605,938],[620,935],[661,935],
  [669,930],[677,913],[686,893],[693,879],[702,868],[718,855],[725,847],[733,843],[754,840],[809,840],[822,842],
  [829,847],[838,853],[845,862],[853,874],[862,888],[869,907],[878,925],[885,933],[893,936],[902,936],[909,927],
  [918,908],[925,890],[933,875],[943,861],[958,850],[973,844],[982,843],[989,848],[998,860],[1005,877],[1013,897],
  [1022,912],[1035,927],[1046,931],[1054,931],[1062,927],[1069,916],[1078,897],[1085,878],[1093,864],[1109,849],
  [1118,847],[1125,851],[1133,860],[1149,882],[1165,904],[1173,913],[1182,916],[1198,899],[1205,885],[1213,871],
  [1222,856],[1229,851],[1237,849],[1248,849],[1255,851],[1262,866],[1270,885],[1278,903],[1292,917],[1309,928],
  [1325,935],[1338,938],[1472,938],[1486,936],[1495,934],[1503,929],[1511,923],[1518,914],[1526,902],[1534,889]];
const signal = [[0,877],[5,881],[13,862],[21,857],[29,857],[39,864],[46,866],[53,875],[62,872],[69,877],[80,877],
  [85,875],[93,875],[101,881],[109,878],[117,871],[125,873],[149,902],[158,902],[165,898],[173,893],[181,892],
  [189,908],[204,908],[239,910],[253,917],[263,917],[269,915],[278,915],[285,902],[302,903],[309,899],[318,905],
  [331,909],[341,909],[349,913],[358,908],[365,906],[373,900],[389,901],[397,881],[413,884],[421,885],[429,875],
  [437,878],[453,871],[486,867],[494,894],[501,890],[509,891],[517,896],[525,907],[533,909],[541,904],[549,909],
  [557,909],[565,904],[573,904],[588,908],[596,911],[605,911],[613,894],[621,895],[629,906],[640,906],[653,909],
  [661,903],[669,903],[677,897],[693,874],[702,871],[711,871],[725,868],[741,880],[749,874],[758,872],[765,863],
  [789,861],[798,867],[806,867],[813,861],[822,873],[838,880],[845,875],[853,878],[862,874],[869,879],[878,879],
  [885,882],[893,898],[901,883],[909,872],[918,884],[925,877],[950,876],[965,873],[973,873],[987,879],[998,879],
  [1005,902],[1013,892],[1022,892],[1032,897],[1039,897],[1046,893],[1053,885],[1062,885],[1078,874],[1085,871],
  [1093,871],[1101,875],[1109,873],[1118,894],[1125,894],[1142,890],[1156,888],[1165,881],[1173,880],[1189,884],
  [1198,891],[1205,876],[1213,889],[1229,885],[1238,887],[1245,877],[1253,882],[1262,892],[1269,895],[1286,894],
  [1292,901],[1299,906],[1309,910],[1319,906],[1335,907],[1342,904],[1354,909],[1368,909],[1376,911],[1391,910],
  [1413,911],[1422,909],[1438,911],[1446,925],[1455,925],[1462,917],[1486,918],[1502,909],[1510,911],[1527,904],
  [1534,904]];
line(trend, 0, '#f0f', 3);
line(signal, 0, '#ff0', 2);

// frames and axes
path(`M0 53.5H${RIGHT}.5V821.5H0M0 823.5H${RIGHT}.5V953.5H0`, '#fff');
rowY.forEach((y, i) => {
  path(`M${RIGHT} ${y}.5h4`, '#fff');
  if (i !== 18) add('text', { x: 1870, y: y + 4, class: 'axis' }, prices[i]);
});
add('rect', { x: 1866, y: 649, width: 33, height: 11, fill: '#fff' });
add('text', { x: 1870, y: 658, class: 'axis dark' }, '1.09861');

[['1.3', 834], ['70', 867], ['0.00', 892], ['30', 918], ['-1.3', 950]].forEach(([t, y]) => add('text', { x: 1868, y, class: 'axis' }, t));
[['0.75', 847], ['-0.75', 920]].forEach(([t, y]) => {
  add('rect', { x: 1867, y, width: t.length > 4 ? 24 : 20, height: 11, fill: '#ff0' });
  add('text', { x: 1868, y: y + 9, class: 'axis dark' }, t);
});

const dates = ['23 Aug 2024', '26 Aug 16:00', '28 Aug 00:00', '29 Aug 08:00', '30 Aug 16:00', '3 Sep 00:00',
  '4 Sep 08:00', '5 Sep 16:00', '9 Sep 00:00', '10 Sep 08:00', '11 Sep 16:00', '13 Sep 00:00', '16 Sep 08:00',
  '17 Sep 16:00', '19 Sep 00:00', '20 Sep 08:00', '23 Sep 16:00', '25 Sep 00:00', '26 Sep 08:00',
  '27 Sep 16:00', '1 Oct 00:00', '2 Oct 08:00', '3 Oct 16:00', '7 Oct 00:00', '8 Oct 08:00'];
dates.forEach((d, i) => {
  const x = -3 + 64 * i;
  path(`M${x}.5 953v4`, '#fff');
  add('text', { x: x - 1, y: 966, class: 'axis' }, d);
});

// title and shift marks
add('path', { d: 'M0 60h7l-3.500 4z', fill: '#fff' });
add('text', { x: 12, y: 65, class: 'title' }, 'EURUSD,H4');
add('path', { d: 'M1541 54h9l-4.500 5z', fill: SLATE });

// quote panel
[['1.09883', 1764, 81, 'cyan'], ['-22', 1808, 81, 'cyan'], ['199', 1854, 81, 'cyan'],
  ['1.09684', 1764, 129, 'blue'], ['177', 1808, 129, 'cyan'], ['581.0', 1854, 129, 'cyan'],
  ['127.0', 1764, 141, 'blue'], ['12.0', 1808, 141, 'blue']
].forEach(([t, x, y, c]) => add('text', { x, y, class: 'quote ' + c }, t));
add('text', { x: 1695, y: 116, class: 'big cyan' }, '1.09861');
add('text', { x: 1734, y: 174, class: 'symbol cyan' }, 'EURUSD');
[['TF', 1721], ['CC', 1746], ['BS', 1775], ['Str', 1807], ['TR', 1837]].forEach(([t, x]) => add('text', { x, y: 197, class: 'head' }, t));

function smallArrow(x, y, up) {
  const s = up ? 1 : -1;
  const pts = [[0, -4.5], [4, 0], [2, 0], [2, 4.5], [-2, 4.5], [-2, 0], [-4, 0]];
  add('polygon', { points: pts.map(p => `${x + p[0]},${y + s * p[1]}`).join(' '), fill: 'none', stroke: up ? '#c8c8c8' : '#00a8f0' });
}
// timeframe, y, BS up, TR up
[['H4', 215, 1, 0], ['H1', 227, 1, 1], ['M30', 239, 1, 1], ['M15', 263, 1, 1], ['M5', 275, 1, 1], ['M1', 287, 0, 1]].forEach(([t, y, bs, tr]) => {
  add('text', { x: 1737, y: y + 4, class: 'tf' }, t);
  if (t === 'M1') add('path', { d: `M1757 ${y - 4}l1 3 3 1-3 1-1 3-1-3-3-1 3-1z`, fill: '#ddd' });
  else add('rect', { x: 1754, y: y - 4, width: 8, height: 8, fill: '#0ff' });
  smallArrow(1785.5, y, bs);
  if (t === 'H4') add('path', { d: `M1818 ${y - 5}l1.200 3.500h3.600l-3 2.200 1.200 3.800-3-2.300-3 2.300 1.200-3.800-3-2.200h3.600z`, fill: '#fff' });
  else smallArrow(1818.5, y, 1);
  smallArrow(1848.5, y, tr);
});
add('text', { x: 1854, y: 301, class: 'author' }, 'Created by ServerUang');

// ink notes
['M1567 373L1568 436', 'M1570 400L1597 401L1617 402', 'M1615 375L1616 445',
  'M1668 343V361L1664 370L1653 400V415L1661 416L1666 418L1685 418L1700 420',
  'M1711 356V415L1709 430V468L1708 476',
  'M1553 553L1561 556L1568 560L1585 571L1597 578L1617 587L1629 596L1648 609L1662 616L1677 628L1693 636L1710 645L1726 655L1732 662L1750 676L1758 683L1767 693L1778 705L1789 716L1793 723L1799 732L1818 751L1824 764L1833 781L1835 757L1833 737L1838 767L1840 794L1827 792L1813 786L1807 781H1801',
  'M1636 846L1640 852L1662 867L1684 877L1725 889L1734 892L1758 904L1772 909L1791 922L1803 926L1817 937L1811 912L1812 901L1820 923L1821 937L1818 940',
  'M1770 941H1819'
].forEach(d => add('path', { d, class: 'ink' }));
add('path', { d: 'M0 824H39L53 827H86L88 829L137 826L138 834L127 839L88 843H49L12 841L0 839z', fill: '#f00' });
```
